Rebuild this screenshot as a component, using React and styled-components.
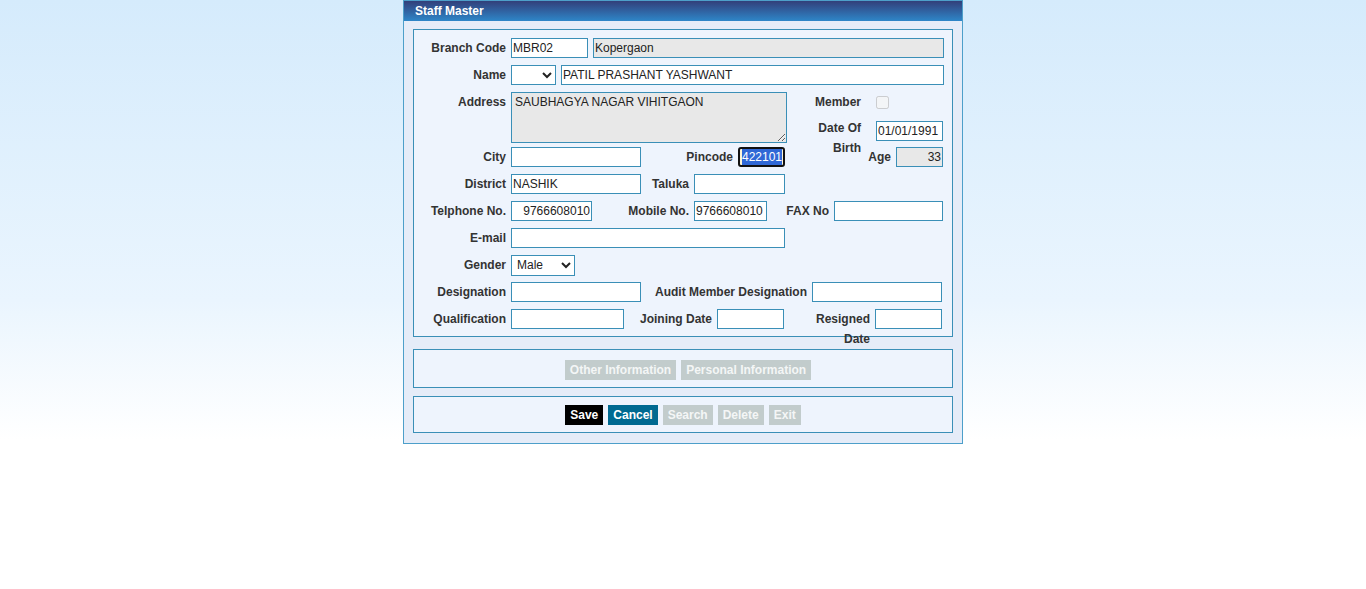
import React from 'react';
import styled, { createGlobalStyle } from 'styled-components';

const GlobalStyle = createGlobalStyle`
  html, body {
    margin: 0;
    padding: 0;
    min-height: 100%;
  }
  body {
    min-height: 100vh;
    background: #ffffff linear-gradient(to bottom, #d5ebfc 0px, #eaf5fe 300px, #ffffff 440px) no-repeat;
    font-family: "Liberation Sans", Arial, sans-serif;
  }
`;

const Panel = styled.div`
  width: 560px;
  margin: 0 auto;
  box-sizing: border-box;
  border: 1px solid #4d9fca;
  background: #e5ecf8;
`;

const Header = styled.div`
  height: 20px;
  line-height: 20px;
  padding-left: 11px;
  background: linear-gradient(to bottom, #323f7a, #2e86c8);
  color: #ffffff;
  font-size: 12px;
  font-weight: bold;
`;

const Body = styled.div`
  padding: 8px 9px 10px;
`;

const Box = styled.div`
  border: 1px solid #3a8fb7;
  background: #eef4fd;
  margin-top: ${p => p.mt || 0}px;
  padding: ${p => p.pad};
`;

const Rows = styled.div`
  display: flex;
  flex-direction: column;
  gap: 7px;
`;

const Row = styled.div`
  display: flex;
  align-items: ${p => p.align || 'center'};
  height: ${p => p.h || 20}px;
`;

const Label = styled.div`
  flex-shrink: 0;
  box-sizing: border-box;
  width: ${p => p.w}px;
  padding-right: ${p => (p.pr == null ? 5 : p.pr)}px;
  padding-top: ${p => p.pt || 0}px;
  align-self: ${p => p.self || 'auto'};
  text-align: right;
  font-size: 12px;
  font-weight: bold;
  line-height: 20px;
  color: #333333;
  white-space: nowrap;
`;

const Input = styled.input`
  flex-shrink: 0;
  box-sizing: border-box;
  width: ${p => p.w}px;
  height: 20px;
  margin: ${p => (p.mt ? `${p.mt}px` : 0)} ${p => p.mr || 0}px 0 0;
  align-self: ${p => (p.mt ? 'flex-start' : 'auto')};
  padding: 0 1px;
  border: 1px solid #3a8fb7;
  border-radius: 0;
  outline: none;
  background: ${p => (p.gray ? '#e8e8e8' : '#ffffff')};
  font-family: "Liberation Sans", Arial, sans-serif;
  font-size: 12px;
  color: #222222;
  text-align: ${p => (p.right ? 'right' : 'left')};
`;

const Select = styled.select`
  flex-shrink: 0;
  box-sizing: border-box;
  width: ${p => p.w}px;
  height: ${p => p.h || 20}px;
  margin: 0 ${p => p.mr || 0}px 0 0;
  padding: 0 1px;
  border: 1px solid #3a8fb7;
  border-radius: 0;
  background: #ffffff;
  font-family: "Liberation Sans", Arial, sans-serif;
  font-size: 12px;
  color: #222222;
`;

const TextArea = styled.textarea`
  box-sizing: border-box;
  width: 276px;
  height: 51px;
  margin: 0;
  padding: 2px 3px;
  border: 1px solid #3a8fb7;
  border-radius: 0;
  background: #e8e8e8;
  font-family: "Liberation Sans", Arial, sans-serif;
  font-size: 12px;
  color: #222222;
`;

const PinBox = styled.div`
  flex-shrink: 0;
  box-sizing: border-box;
  width: 47px;
  height: 20px;
  border: 2px solid #111111;
  border-radius: 3px;
  background: #fdf5d6;
  padding-left: 2px;
  overflow: hidden;
  display: flex;
  align-items: stretch;
`;

const Selected = styled.span`
  background: #3068d6;
  color: #ffffff;
  font-size: 12px;
  line-height: 16px;
`;

const Check = styled.input`
  width: 13px;
  height: 13px;
  margin: 0;
`;

const Split = styled.div`
  display: flex;
  height: 75px;
`;

const Column = styled.div`
  display: flex;
  flex-direction: column;
  width: ${p => p.w}px;
  gap: ${p => p.gap || 0}px;
`;

const ButtonBar = styled.div`
  display: flex;
  justify-content: center;
  gap: 5px;
  padding-left: ${p => p.shift || 0}px;
`;

const Button = styled.button`
  height: 20px;
  padding: 0 5px;
  margin: 0;
  border: none;
  border-radius: 0;
  background: ${p => p.bg || '#c2cccc'};
  color: ${p => p.fg || '#f4f6f6'};
  font-family: "Liberation Sans", Arial, sans-serif;
  font-size: 12px;
  font-weight: bold;
  cursor: pointer;
`;

export default function App() {
  return (
    <>
      <GlobalStyle />
      <Panel>
        <Header>Staff Master</Header>
        <Body>
          <Box pad="8px 0 7px">
            <Rows>
              <Row>
                <Label w={97}>Branch Code</Label>
                <Input w={77} mr={5} defaultValue="MBR02" />
                <Input w={351} gray defaultValue="Kopergaon" readOnly />
              </Row>
              <Row>
                <Label w={97}>Name</Label>
                <Select w={45} mr={5} defaultValue="">
                  <option value=""></option>
                  <option value="Mr">Mr.</option>
                  <option value="Mrs">Mrs.</option>
                </Select>
                <Input w={383} defaultValue="PATIL PRASHANT YASHWANT" />
              </Row>
              <Split>
                <Column w={373} gap={4}>
                  <Row h={51} align="flex-start">
                    <Label w={97} pt={0}>Address</Label>
                    <TextArea defaultValue="SAUBHAGYA NAGAR VIHITGAON" readOnly />
                  </Row>
                  <Row>
                    <Label w={97}>City</Label>
                    <Input w={130} mr={5} />
                    <Label w={92}>Pincode</Label>
                    <PinBox>
                      <Selected>422101</Selected>
                    </PinBox>
                  </Row>
                </Column>
                <Column w={157}>
                  <Row>
                    <Label w={89} pr={15}>Member</Label>
                    <Check type="checkbox" disabled />
                  </Row>
                  <Row h={29} align="flex-start" style={{ marginTop: 6 }}>
                    <Label w={89} pr={15} self="flex-start">
                      Date Of
                      <br />
                      Birth
                    </Label>
                    <Input w={67} mt={3} defaultValue="01/01/1991" />
                  </Row>
                  <Row>
                    <Label w={109}>Age</Label>
                    <Input w={47} gray right defaultValue="33" readOnly />
                  </Row>
                </Column>
              </Split>
              <Row>
                <Label w={97}>District</Label>
                <Input w={130} mr={5} defaultValue="NASHIK" />
                <Label w={48}>Taluka</Label>
                <Input w={91} />
              </Row>
              <Row>
                <Label w={97}>Telphone No.</Label>
                <Input w={81} mr={5} right defaultValue="9766608010" />
                <Label w={97}>Mobile No.</Label>
                <Input w={73} mr={5} defaultValue="9766608010" />
                <Label w={62}>FAX No</Label>
                <Input w={109} />
              </Row>
              <Row>
                <Label w={97}>E-mail</Label>
                <Input w={274} />
              </Row>
              <Row>
                <Label w={97}>Gender</Label>
                <Select w={64} h={21} defaultValue="Male">
                  <option value="Male">Male</option>
                  <option value="Female">Female</option>
                </Select>
              </Row>
              <Row>
                <Label w={97}>Designation</Label>
                <Input w={130} mr={5} />
                <Label w={166}>Audit Member Designation</Label>
                <Input w={130} />
              </Row>
              <Row>
                <Label w={97}>Qualification</Label>
                <Input w={113} mr={5} />
                <Label w={88}>Joining Date</Label>
                <Input w={67} mr={5} />
                <Label w={86} self="flex-start">
                  Resigned
                  <br />
                  Date
                </Label>
                <Input w={67} />
              </Row>
            </Rows>
          </Box>
          <Box mt={12} pad="10px 0 7px">
            <ButtonBar shift={10}>
              <Button>Other Information</Button>
              <Button>Personal Information</Button>
            </ButtonBar>
          </Box>
          <Box mt={8} pad="8px 0 7px">
            <ButtonBar>
              <Button bg="#000000" fg="#ffffff">Save</Button>
              <Button bg="#006a91" fg="#ffffff">Cancel</Button>
              <Button>Search</Button>
              <Button>Delete</Button>
              <Button>Exit</Button>
            </ButtonBar>
          </Box>
        </Body>
      </Panel>
    </>
  );
}
